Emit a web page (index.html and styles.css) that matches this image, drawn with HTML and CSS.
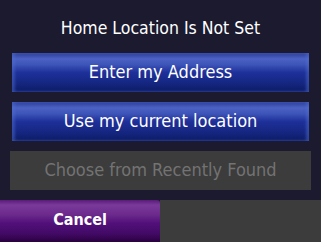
FILE: index.html
```html
<!DOCTYPE html>
<html lang="en">
<head>
	<meta charset="UTF-8">
	<title>Home Location Is Not Set</title>
	<link rel="stylesheet" href="styles.css">
</head>
<body>
	<div id="screen">
		<h1 class="title">Home Location Is Not Set</h1>
		<div class="options">
			<button class="opt blue">Enter my Address</button>
			<button class="opt blue">Use my current location</button>
			<button class="opt gray" disabled>Choose from Recently Found</button>
		</div>
		<div class="footer">
			<button class="cancel">Cancel</button>
			<div class="filler"></div>
		</div>
	</div>
</body>
</html>
```
FILE: styles.css
```css
body {
	margin: 0;
	background-color: #1b1a2f;
	font-family: "DejaVu Sans Condensed", "DejaVu Sans", sans-serif;
}
#screen {
	width: 321px;
	height: 242px;
	display: flex;
	flex-direction: column;
}
.title {
	margin: 0;
	height: 53px;
	line-height: 56px;
	font-size: 17.5px;
	font-weight: normal;
	color: #fff;
	text-align: center;
}
.options {
	display: flex;
	flex-direction: column;
	gap: 10px;
	padding: 0 10px;
}
.opt {
	height: 39px;
	border: 0;
	padding: 0 0 3px;
	font-family: "DejaVu Sans Condensed", "DejaVu Sans", sans-serif;
	font-size: 18px;
}
.blue {
	margin: 0 2px;
	color: #fff;
	background: linear-gradient(#2d3c96 0%, #4c62c4 15%, #3d54b8 30%, #1e309a 50%, #14257e 80%, #0c1a62 100%);
	box-shadow: inset 3px 0 3px rgba(80, 110, 210, 0.5), inset -3px 0 3px rgba(80, 110, 210, 0.5);
}
.gray {
	color: #737373;
	background-color: #3c3c3c;
}
.footer {
	margin-top: 10px;
	flex: 1;
	display: flex;
}
.cancel {
	width: 160px;
	border: 0;
	padding: 0 0 4px;
	border-radius: 0 3px 0 0;
	color: #fff;
	font-family: "DejaVu Sans Condensed", "DejaVu Sans", sans-serif;
	font-size: 16px;
	font-weight: bold;
	background: linear-gradient(#5a1a7a 0%, #7a3a9a 12%, #6b2a8c 35%, #52107a 55%, #420a66 80%, #2a0040 100%);
}
.filler {
	flex: 1;
	background-color: #3c3c3c;
}
```
